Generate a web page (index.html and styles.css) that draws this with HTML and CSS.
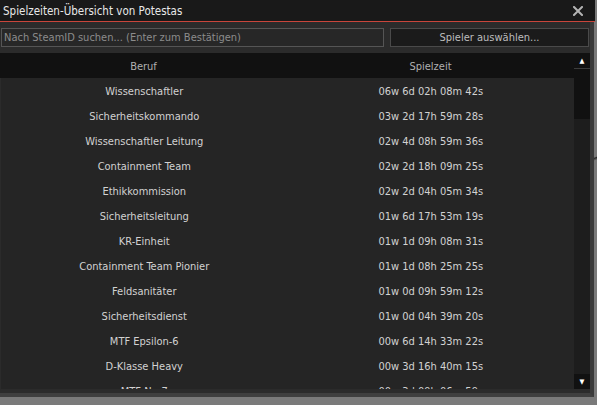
FILE: index.html
```html
<!DOCTYPE html>
<html lang="de">
<head>
    <meta charset="UTF-8">
    <title>Spielzeiten-Übersicht</title>
    <link rel="stylesheet" href="styles.css">
</head>
<body>
    <div class="window">
        <div class="titlebar">
            <span class="title">Spielzeiten-Übersicht von Potestas</span>
            <svg class="close" width="10" height="10" viewBox="0 0 10 10">
                <path d="M1 1 L9 9 M9 1 L1 9" stroke="#b4b4b4" stroke-width="2" stroke-linecap="square"/>
            </svg>
        </div>
        <div class="content">
            <div class="search-row">
                <input type="text" class="search-input" placeholder="Nach SteamID suchen... (Enter zum Bestätigen)">
                <button class="pick-btn">Spieler auswählen...</button>
            </div>
            <div class="list">
                <div class="list-main">
                    <div class="list-header">
                        <span>Beruf</span>
                        <span>Spielzeit</span>
                    </div>
                    <div class="rows">
                        <div class="row"><span>Wissenschaftler</span><span>06w 6d 02h 08m 42s</span></div>
                        <div class="row"><span>Sicherheitskommando</span><span>03w 2d 17h 59m 28s</span></div>
                        <div class="row"><span>Wissenschaftler Leitung</span><span>02w 4d 08h 59m 36s</span></div>
                        <div class="row"><span>Containment Team</span><span>02w 2d 18h 09m 25s</span></div>
                        <div class="row"><span>Ethikkommission</span><span>02w 2d 04h 05m 34s</span></div>
                        <div class="row"><span>Sicherheitsleitung</span><span>01w 6d 17h 53m 19s</span></div>
                        <div class="row"><span>KR-Einheit</span><span>01w 1d 09h 08m 31s</span></div>
                        <div class="row"><span>Containment Team Pionier</span><span>01w 1d 08h 25m 25s</span></div>
                        <div class="row"><span>Feldsanitäter</span><span>01w 0d 09h 59m 12s</span></div>
                        <div class="row"><span>Sicherheitsdienst</span><span>01w 0d 04h 39m 20s</span></div>
                        <div class="row"><span>MTF Epsilon-6</span><span>00w 6d 14h 33m 22s</span></div>
                        <div class="row"><span>D-Klasse Heavy</span><span>00w 3d 16h 40m 15s</span></div>
                        <div class="row"><span>MTF Nu-7</span><span>00w 3d 09h 06m 59s</span></div>
                    </div>
                </div>
                <div class="scrollbar">
                    <div class="scroll-btn">&#9650;</div>
                    <div class="scroll-track">
                        <div class="scroll-grip"></div>
                    </div>
                    <div class="scroll-btn">&#9660;</div>
                </div>
            </div>
        </div>
    </div>
</body>
</html>
```

FILE: styles.css
```css
body {
    margin: 0;
    width: 597px;
    height: 405px;
    overflow: hidden;
    background-color: #7a7a7a;
    background-image: linear-gradient(160deg, transparent 0 60%, #2a2a2a 60.2%, transparent 60.6%);
    font-family: 'DejaVu Sans Condensed', 'Liberation Sans', sans-serif;
    font-size: 11px;
    color: #d6d6d6;
}
.window {
    width: 594px;
    height: 397px;
    display: flex;
    flex-direction: column;
    background-color: #404040;
}
.titlebar {
    height: 21px;
    width: 592px;
    background-color: #191919;
    border-bottom: 1px solid #c9453b;
    display: flex;
    align-items: center;
    justify-content: space-between;
    padding: 0 0 0 3px;
    box-sizing: content-box;
    margin-right: -1px;
}
.title {
    color: #e8e8e8;
    font-size: 11.5px;
}
.close {
    margin-right: 12px;
}
.content {
    flex: 1;
    display: flex;
    flex-direction: column;
    background-color: #2b2b2b;
    padding: 6px 4px 4px 0;
    border-right: 4px solid #3a3a3a;
    border-bottom: 4px solid #3f3f3f;
    min-height: 0;
}
.search-row {
    display: flex;
    gap: 6px;
    height: 19px;
    margin-bottom: 6px;
    padding-left: 1px;
}
.search-input {
    width: 383px;
    box-sizing: border-box;
    height: 19px;
    padding: 0 2px;
    background-color: #272727;
    border: 1px solid #555;
    color: #d0d0d0;
    font-family: inherit;
    font-size: 11px;
    outline: none;
}
.search-input::placeholder {
    color: #8c8c8c;
}
.pick-btn {
    flex: 1;
    height: 19px;
    margin-right: -3px;
    background-color: #1b1b1b;
    border: 1px solid #4a4a4a;
    color: #bdbdbd;
    font-family: inherit;
    font-size: 11px;
    padding: 0;
}
.list {
    flex: 1;
    display: flex;
    min-height: 0;
    margin-right: -4px;
}
.list-main {
    flex: 1;
    display: flex;
    flex-direction: column;
    min-height: 0;
    overflow: hidden;
}
.list-header, .row {
    display: grid;
    grid-template-columns: 1fr 1fr;
    text-align: center;
    align-items: center;
    box-sizing: border-box;
    padding-top: 1px;
}
.list-header {
    height: 25px;
    flex: none;
    background-color: #111;
    color: #b0b0b0;
}
.rows {
    flex: 1;
    overflow: hidden;
    background-color: #252525;
    margin-left: 1px;
}
.row {
    height: 25px;
    color: #d2d2d2;
}
.scrollbar {
    width: 16px;
    display: flex;
    flex-direction: column;
    background-color: #1d1d1d;
}
.scroll-btn {
    height: 15px;
    background-color: #111;
    color: #fff;
    font-size: 7px;
    display: flex;
    align-items: center;
    justify-content: center;
}
.scroll-track {
    flex: 1;
    border-top: 1px solid #3c3c3c;
}
.scroll-grip {
    height: 50px;
    background-color: #111;
}
```
